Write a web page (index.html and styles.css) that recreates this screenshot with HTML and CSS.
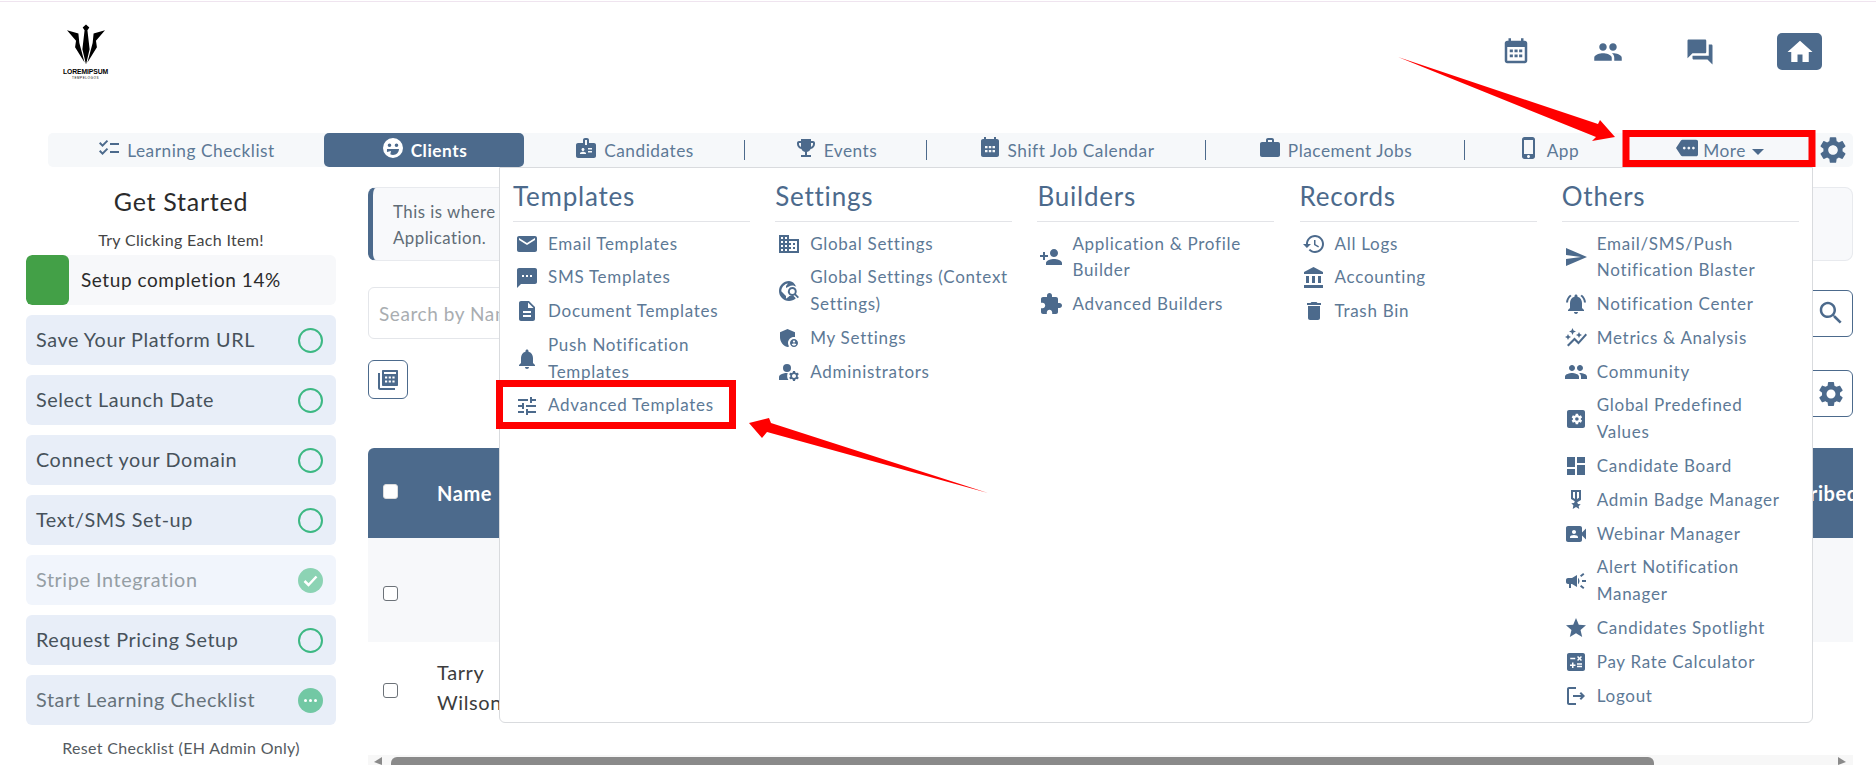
FILE: index.html
```html
<!DOCTYPE html>
<html lang="en">
<head>
<meta charset="utf-8">
<title>Clients</title>
<link rel="stylesheet" href="styles.css">
</head>
<body>
<svg class="sprite" xmlns="http://www.w3.org/2000/svg">
<symbol id="i-cal" viewBox="0 0 24 24"><path d="M19 3h-1V1h-2v2H8V1H6v2H5c-1.1 0-2 .9-2 2v14c0 1.1.9 2 2 2h14c1.1 0 2-.9 2-2V5c0-1.1-.9-2-2-2zm0 16H5V8h14v11zM7 10h2.5v2.2H7zm3.8 0h2.5v2.2h-2.5zm3.700 0H17v2.2h-2.500zM7 14h2.500v2.200H7zm3.800 0h2.500v2.200h-2.500zm3.700 0H17v2.200h-2.500z"/></symbol>
<symbol id="i-calfill" viewBox="0 0 24 24"><path fill-rule="evenodd" d="M19 3h-1V1h-2v2H8V1H6v2H5c-1.100 0-2 .9-2 2v14c0 1.100.9 2 2 2h14c1.100 0 2-.9 2-2V5c0-1.100-.9-2-2-2zM7 10h2.500v2.200H7zm3.800 0h2.500v2.200h-2.500zm3.700 0H17v2.200h-2.500zM7 14h2.500v2.200H7zm3.800 0h2.500v2.200h-2.500zm3.700 0H17v2.200h-2.500z"/></symbol>
<symbol id="i-people" viewBox="0 0 24 24"><path d="M16 11c1.660 0 2.990-1.340 2.990-3S17.660 5 16 5c-1.660 0-3 1.340-3 3s1.340 3 3 3zm-8 0c1.660 0 2.990-1.340 2.990-3S9.660 5 8 5C6.340 5 5 6.340 5 8s1.340 3 3 3zm0 2c-2.330 0-7 1.170-7 3.500V19h14v-2.500c0-2.330-4.670-3.500-7-3.500zm8 0c-.29 0-.62.02-.97.05 1.160.84 1.970 1.970 1.970 3.450V19h6v-2.500c0-2.330-4.670-3.500-7-3.500z"/></symbol>
<symbol id="i-forum" viewBox="0 0 24 24"><path d="M21 6h-2v9H6v2c0 .55.45 1 1 1h11l4 4V7c0-.55-.45-1-1-1zm-4 6V3c0-.55-.45-1-1-1H3c-.55 0-1 .45-1 1v14l4-4h10c.55 0 1-.45 1-1z"/></symbol>
<symbol id="i-home" viewBox="0 0 24 24"><path d="M10 20v-6h4v6h5v-8h3L12 3 2 12h3v8z"/></symbol>
<symbol id="i-gear" viewBox="0 0 24 24"><path d="M19.140 12.940c.04-.3.06-.61.06-.94 0-.32-.02-.64-.07-.94l2.030-1.580c.18-.14.23-.41.12-.61l-1.920-3.320c-.12-.22-.37-.29-.59-.22l-2.390.96c-.5-.38-1.030-.7-1.620-.94l-.36-2.540c-.04-.24-.24-.41-.48-.41h-3.840c-.24 0-.43.17-.47.41l-.36 2.540c-.59.24-1.130.57-1.620.94l-2.390-.96c-.22-.08-.47 0-.59.22L2.740 8.870c-.12.21-.08.47.12.61l2.030 1.580c-.05.3-.09.63-.09.94s.02.64.07.94l-2.030 1.580c-.18.14-.23.41-.12.61l1.920 3.320c.12.22.37.29.59.22l2.390-.96c.5.38 1.030.7 1.620.94l.36 2.540c.05.24.24.41.48.41h3.840c.24 0 .44-.17.47-.41l.36-2.540c.59-.24 1.130-.56 1.620-.94l2.390.96c.22.08.47 0 .59-.22l1.920-3.320c.12-.22.07-.47-.12-.61l-2.010-1.580zM12 15.600c-1.980 0-3.600-1.620-3.600-3.600s1.620-3.600 3.600-3.600 3.600 1.620 3.600 3.600-1.620 3.600-3.600 3.600z"/></symbol>
<symbol id="i-search" viewBox="0 0 24 24"><path d="M15.500 14h-.79l-.28-.27C15.410 12.590 16 11.110 16 9.500 16 5.910 13.090 3 9.500 3S3 5.910 3 9.500 5.910 16 9.500 16c1.610 0 3.090-.59 4.230-1.570l.27.28v.79l5 4.990L20.490 19l-4.990-5zm-6 0C7.010 14 5 11.990 5 9.500S7.010 5 9.500 5 14 7.010 14 9.500 11.990 14 9.500 14z"/></symbol>
<symbol id="i-mail" viewBox="0 0 24 24"><path d="M20 4H4c-1.100 0-1.990.9-1.990 2L2 18c0 1.100.9 2 2 2h16c1.100 0 2-.9 2-2V6c0-1.100-.9-2-2-2zm0 4l-8 5-8-5V6l8 5 8-5v2z"/></symbol>
<symbol id="i-sms" viewBox="0 0 24 24"><path d="M20 2H4c-1.100 0-1.990.9-1.990 2L2 22l4-4h14c1.100 0 2-.9 2-2V4c0-1.100-.9-2-2-2zM9 11H7V9h2v2zm4 0h-2V9h2v2zm4 0h-2V9h2v2z"/></symbol>
<symbol id="i-doc" viewBox="0 0 24 24"><path d="M14 2H6c-1.100 0-1.990.9-1.990 2L4 20c0 1.100.89 2 1.990 2H18c1.100 0 2-.9 2-2V8l-6-6zm2 16H8v-2h8v2zm0-4H8v-2h8v2zm-3-5V3.500L18.500 9H13z"/></symbol>
<symbol id="i-bell" viewBox="0 0 24 24"><path d="M12 22c1.100 0 2-.9 2-2h-4c0 1.100.89 2 2 2zm6-6v-5c0-3.070-1.640-5.640-4.500-6.320V4c0-.83-.67-1.500-1.500-1.500s-1.500.67-1.500 1.500v.68C7.630 5.360 6 7.920 6 11v5l-2 2v1h16v-1l-2-2z"/></symbol>
<symbol id="i-tune" viewBox="0 0 24 24"><path d="M3 17v2h6v-2H3zM3 5v2h10V5H3zm10 16v-2h8v-2h-8v-2h-2v6h2zM7 9v2H3v2h4v2h2V9H7zm14 4v-2H11v2h10zm-6-4h2V7h4V5h-4V3h-2v6z"/></symbol>
<symbol id="i-domain" viewBox="0 0 24 24"><path d="M12 7V3H2v18h20V7H12zM6 19H4v-2h2v2zm0-4H4v-2h2v2zm0-4H4V9h2v2zm0-4H4V5h2v2zm4 12H8v-2h2v2zm0-4H8v-2h2v2zm0-4H8V9h2v2zm0-4H8V5h2v2zm10 12h-8v-2h2v-2h-2v-2h2v-2h-2V9h8v10zm-2-8h-2v2h2v-2zm0 4h-2v2h2v-2z"/></symbol>
<symbol id="i-explore" viewBox="0 0 24 24"><path d="M12 2C6.500 2 2 6.500 2 12s4.500 10 10 10c2.600 0 5-1 6.800-2.700l-3-3c-1 .6-2.200.9-3.500.7-1.100 1.300-2.300 2.200-3.300 2.500V17L6.500 14.500 4.300 12.300c0-4 3-7.300 6.700-7.800L9 7v2l3-1.500c1-.6 2.100-1 3.300-1 1.500 0 2.900.5 4 1.500C17.800 4.200 15 2 12 2z"/><path d="M15.300 8a4.500 4.500 0 0 0-3.700 7c.8 1.200 2.200 2 3.700 2 .9 0 1.700-.3 2.400-.7l3 3 1.300-1.300-3-3c.4-.7.700-1.500.700-2.400a4.400 4.400 0 0 0-4.400-4.600zm0 2a2.500 2.500 0 1 1 0 5 2.500 2.500 0 0 1 0-5z"/></symbol>
<symbol id="i-shield" viewBox="0 0 24 24"><path d="M17 11c.34 0 .67.04 1 .09V6.270L10.500 3 3 6.270v4.910c0 4.540 3.200 8.790 7.500 9.820.55-.13 1.080-.32 1.600-.55A5.970 5.970 0 0 1 11 17c0-3.310 2.690-6 6-6z"/><path d="M17 13c-2.210 0-4 1.790-4 4s1.790 4 4 4 4-1.790 4-4-1.790-4-4-4zm0 1.380c.62 0 1.120.51 1.120 1.120s-.51 1.120-1.120 1.120-1.120-.51-1.120-1.120.5-1.120 1.120-1.120zm0 5.370c-.93 0-1.740-.46-2.240-1.170.05-.72 1.510-1.080 2.240-1.080s2.190.36 2.240 1.080c-.5.710-1.310 1.170-2.240 1.170z"/></symbol>
<symbol id="i-manage" viewBox="0 0 24 24"><circle cx="10" cy="8" r="4"/><path d="M10.670 13.020C10.450 13.010 10.230 13 10 13c-2.420 0-4.680.67-6.610 1.820-.88.52-1.390 1.500-1.390 2.530V20h9.430c-.79-1.130-1.260-2.510-1.260-4 0-1.070.25-2.060.5-2.980zM20.750 16c0-.22-.03-.42-.06-.63l1.140-1.010-1-1.730-1.450.49c-.32-.27-.68-.48-1.080-.63L18 11h-2l-.3 1.490c-.4.15-.76.36-1.080.63l-1.450-.49-1 1.730 1.140 1.010c-.03.21-.06.41-.06.63s.03.42.06.63l-1.140 1.010 1 1.730 1.450-.49c.32.27.68.48 1.080.63L16 21h2l.3-1.490c.4-.15.76-.36 1.080-.63l1.450.49 1-1.730-1.140-1.010c.03-.21.06-.41.06-.63zM17 18c-1.100 0-2-.9-2-2s.9-2 2-2 2 .9 2 2-.9 2-2 2z"/></symbol>
<symbol id="i-padd" viewBox="0 0 24 24"><path d="M15 12c2.210 0 4-1.790 4-4s-1.790-4-4-4-4 1.790-4 4 1.790 4 4 4zm-9-2V7H4v3H1v2h3v3h2v-3h3v-2H6zm9 4c-2.670 0-8 1.340-8 4v2h16v-2c0-2.660-5.330-4-8-4z"/></symbol>
<symbol id="i-ext" viewBox="0 0 24 24"><path d="M20.500 11H19V7c0-1.100-.9-2-2-2h-4V3.500C13 2.120 11.880 1 10.500 1S8 2.120 8 3.500V5H4c-1.100 0-1.990.9-1.990 2v3.800H3.500c1.490 0 2.700 1.210 2.700 2.700s-1.210 2.700-2.700 2.700H2V20c0 1.100.9 2 2 2h3.800v-1.500c0-1.490 1.210-2.700 2.700-2.700 1.490 0 2.700 1.210 2.700 2.700V22H17c1.100 0 2-.9 2-2v-4h1.500c1.380 0 2.500-1.120 2.500-2.500S21.880 11 20.500 11z"/></symbol>
<symbol id="i-history" viewBox="0 0 24 24"><path d="M13 3c-4.970 0-9 4.030-9 9H1l3.890 3.890.07.14L9 12H6c0-3.870 3.130-7 7-7s7 3.130 7 7-3.130 7-7 7c-1.930 0-3.680-.79-4.940-2.060l-1.420 1.420C8.270 19.990 10.510 21 13 21c4.970 0 9-4.030 9-9s-4.030-9-9-9zm-1 5v5l4.280 2.540.72-1.210-3.500-2.080V8H12z"/></symbol>
<symbol id="i-bank" viewBox="0 0 24 24"><path d="M4 10v7h3v-7H4zm6 0v7h3v-7h-3zM2 22h19v-3H2v3zm14-12v7h3v-7h-3zm-4.500-9L2 6v2h19V6l-9.500-5z"/></symbol>
<symbol id="i-trash" viewBox="0 0 24 24"><path d="M6 19c0 1.100.9 2 2 2h8c1.100 0 2-.9 2-2V7H6v12zM19 4h-3.500l-1-1h-5l-1 1H5v2h14V4z"/></symbol>
<symbol id="i-send" viewBox="0 0 24 24"><path d="M2.010 21L23 12 2.010 3 2 10l15 2-15 2z"/></symbol>
<symbol id="i-bella" viewBox="0 0 24 24"><path d="M7.580 4.080L6.150 2.650C3.750 4.480 2.170 7.300 2.030 10.500h2c.15-2.650 1.510-4.970 3.550-6.420zm12.390 6.420h2c-.15-3.200-1.730-6.020-4.120-7.850l-1.420 1.430c2.020 1.450 3.390 3.770 3.540 6.420zM18 11c0-3.070-1.640-5.640-4.500-6.320V4c0-.83-.67-1.500-1.500-1.500s-1.500.67-1.500 1.500v.68C7.630 5.360 6 7.920 6 11v5l-2 2v1h16v-1l-2-2v-5zm-6 11c.14 0 .27-.01.4-.04.65-.14 1.180-.58 1.440-1.180.1-.24.15-.5.15-.78h-4c.01 1.100.9 2 2.010 2z"/></symbol>
<symbol id="i-graph" viewBox="0 0 24 24"><path d="M14.060 9.940L12 9l2.060-.94L15 6l.94 2.060L18 9l-2.060.94L15 12zM4 14l.94-2.060L7 11l-2.060-.94L4 8l-.94 2.060L1 11l2.060.94zm4.500-5l1.090-2.410L12 5.500 9.590 4.410 8.500 2 7.410 4.410 5 5.500l2.410 1.090zm-4 11.500l6-6.010 4 4L23 8.930l-1.410-1.410-7.090 7.970-4-4L3 19z"/></symbol>
<symbol id="i-gbox" viewBox="0 0 24 24"><path fill-rule="evenodd" d="M5 3h14c1.100 0 2 .9 2 2v14c0 1.100-.9 2-2 2H5c-1.100 0-2-.9-2-2V5c0-1.100.9-2 2-2zm11.800 9.600c.03-.2.05-.4.05-.6s-.02-.4-.05-.6l1.300-1-1.200-2.100-1.550.62c-.3-.24-.65-.44-1.020-.6L14.100 6.700h-2.400l-.23 1.620c-.37.16-.72.36-1.020.6L8.900 8.300 7.700 10.400l1.300 1c-.03.2-.05.4-.05.6s.02.4.05.6l-1.300 1 1.200 2.100 1.550-.62c.3.24.65.44 1.020.6l.23 1.620h2.400l.23-1.620c.37-.16.72-.36 1.020-.6l1.550.62 1.200-2.100zM12.900 13.800a1.800 1.800 0 1 1 0-3.600 1.800 1.800 0 0 1 0 3.600z"/></symbol>
<symbol id="i-dash" viewBox="0 0 24 24"><path d="M3 13h8V3H3v10zm0 8h8v-6H3v6zm10 0h8V11h-8v10zm0-18v6h8V3h-8z"/></symbol>
<symbol id="i-medal" viewBox="0 0 24 24"><path d="M17 10.430V2H7v8.430c0 .35.18.68.49.86l3.300 1.980-.78 1.850-2.730.24 2.070 1.790L8.730 21 12 19.070 15.270 21l-.62-2.850 2.070-1.790-2.730-.24-.78-1.850 3.300-1.980c.31-.18.49-.51.49-.86zM11 11.070l-2-1.200V4h2v7.070zm4-1.200l-2 1.200V4h2v5.870z"/></symbol>
<symbol id="i-video" viewBox="0 0 24 24"><path d="M18 10.480V6c0-1.100-.9-2-2-2H4c-1.100 0-2 .9-2 2v12c0 1.100.9 2 2 2h12c1.100 0 2-.9 2-2v-4.480l4 3.980v-11l-4 3.980zM10 8c1.100 0 2 .9 2 2s-.9 2-2 2-2-.9-2-2 .9-2 2-2zm4 8H6v-.57c0-.81.48-1.530 1.220-1.850.85-.37 1.790-.58 2.780-.58.99 0 1.930.21 2.780.58.74.32 1.220 1.040 1.220 1.850V16z"/></symbol>
<symbol id="i-camp" viewBox="0 0 24 24"><path d="M18 11v2h4v-2h-4zm-2 6.610c.96.71 2.210 1.650 3.200 2.390.4-.53.8-1.070 1.200-1.600-.99-.74-2.240-1.680-3.200-2.400-.4.54-.8 1.080-1.200 1.610zM20.400 5.600c-.4-.53-.8-1.070-1.200-1.600-.99.74-2.240 1.680-3.200 2.400.4.53.8 1.070 1.200 1.600.96-.72 2.210-1.650 3.200-2.400zM4 9c-1.100 0-2 .9-2 2v2c0 1.100.9 2 2 2h1v4h2v-4h1l5 3V6L8 9H4zm11.500 3c0-1.330-.58-2.530-1.500-3.350v6.690c.92-.81 1.500-2.010 1.500-3.340z"/></symbol>
<symbol id="i-star" viewBox="0 0 24 24"><path d="M12 17.270L18.180 21l-1.640-7.030L22 9.240l-7.190-.61L12 2 9.190 8.630 2 9.240l5.460 4.730L5.820 21z"/></symbol>
<symbol id="i-calc" viewBox="0 0 24 24"><path d="M19 3H5c-1.100 0-2 .9-2 2v14c0 1.100.9 2 2 2h14c1.100 0 2-.9 2-2V5c0-1.100-.9-2-2-2zm-5.970 4.060L14.090 6l1.410 1.410L16.910 6l1.060 1.060-1.410 1.410 1.410 1.410-1.060 1.060-1.410-1.400-1.410 1.410-1.060-1.060 1.410-1.410-1.410-1.420zM6.250 7.720h5v1.500h-5v-1.500zM11.500 16h-2v2H8v-2H6v-1.500h2v-2h1.500v2h2V16zm6.500 1.250h-5v-1.500h5v1.500zm0-2.500h-5v-1.500h5v1.500z"/></symbol>
<symbol id="i-logout" viewBox="0 0 24 24"><path d="M17 8l-1.410 1.410L17.170 11H9v2h8.170l-1.580 1.580L17 16l4-4-4-4zM5 5h7V3H5c-1.100 0-2 .9-2 2v14c0 1.100.9 2 2 2h7v-2H5V5z"/></symbol>
<symbol id="i-check" viewBox="0 0 24 24"><path d="M22 7h-9v2h9V7zm0 8h-9v2h9v-2zM5.540 11L2 7.460l1.410-1.410 2.120 2.120 4.240-4.240 1.410 1.410L5.540 11zm0 8L2 15.460l1.410-1.410 2.120 2.120 4.240-4.240 1.410 1.410L5.540 19z"/></symbol>
<symbol id="i-face" viewBox="0 0 24 24"><path fill-rule="evenodd" d="M12 2a10 10 0 1 0 0 20 10 10 0 0 0 0-20zM8.500 7.500a1.800 1.800 0 1 1 0 3.600 1.800 1.800 0 0 1 0-3.600zm7 0a1.800 1.800 0 1 1 0 3.600 1.800 1.800 0 0 1 0-3.600zM6 13h12c0 3-2.500 6-6 6-1 0-2-.3-2.700-.7l.7-3.300-4 .9c-.1-.7 0-2.900 0-2.900z"/></symbol>
<symbol id="i-badge" viewBox="0 0 24 24"><path d="M20 7h-5V4c0-1.100-.9-2-2-2h-2c-1.100 0-2 .9-2 2v3H4c-1.100 0-2 .9-2 2v11c0 1.100.9 2 2 2h16c1.100 0 2-.9 2-2V9c0-1.100-.9-2-2-2zM9 12c.83 0 1.500.67 1.500 1.500S9.830 15 9 15s-1.500-.67-1.500-1.500S8.170 12 9 12zm3 6H6v-.75c0-1 2-1.500 3-1.500s3 .5 3 1.500V18zm1-9h-2V4h2v5zm5 7.500h-4V15h4v1.500zm0-3h-4V12h4v1.500z"/></symbol>
<symbol id="i-trophy" viewBox="0 0 24 24"><path d="M19 5h-2V3H7v2H5c-1.100 0-2 .9-2 2v1c0 2.550 1.920 4.630 4.390 4.940.63 1.500 1.980 2.630 3.610 2.960V19H7v2h10v-2h-4v-3.100c1.630-.33 2.980-1.460 3.610-2.960C19.080 12.630 21 10.550 21 8V7c0-1.100-.9-2-2-2zM5 8V7h2v3.820C5.840 10.400 5 9.300 5 8zm14 0c0 1.300-.84 2.400-2 2.820V7h2v1z"/></symbol>
<symbol id="i-work" viewBox="0 0 24 24"><path d="M20 6h-4V4c0-1.110-.89-2-2-2h-4c-1.110 0-2 .89-2 2v2H4c-1.110 0-1.990.89-1.990 2L2 19c0 1.110.89 2 2 2h16c1.110 0 2-.89 2-2V8c0-1.110-.89-2-2-2zm-6 0h-4V4h4v2z"/></symbol>
<symbol id="i-phone" viewBox="0 0 24 24"><path d="M15.500 1h-8C6.120 1 5 2.120 5 3.500v17C5 21.880 6.120 23 7.500 23h8c1.380 0 2.500-1.120 2.500-2.500v-17C18 2.120 16.880 1 15.500 1zm-4 21c-.83 0-1.500-.67-1.500-1.500s.67-1.500 1.500-1.500 1.500.67 1.500 1.500-.67 1.500-1.500 1.500zm4.500-4H7V4h9v14z"/></symbol>
<symbol id="i-more" viewBox="0 0 24 24"><path d="M22 3H7c-.69 0-1.230.35-1.590.88L0 12l5.410 8.110c.36.53.9.89 1.590.89h15c1.100 0 2-.9 2-2V5c0-1.100-.9-2-2-2zM9 13.500c-.83 0-1.500-.67-1.500-1.500s.67-1.500 1.500-1.500 1.500.67 1.500 1.500-.67 1.500-1.500 1.500zm5 0c-.83 0-1.500-.67-1.500-1.500s.67-1.500 1.500-1.500 1.500.67 1.500 1.500-.67 1.500-1.500 1.500zm5 0c-.83 0-1.500-.67-1.500-1.500s.67-1.500 1.500-1.500 1.500.67 1.500 1.500-.67 1.500-1.500 1.500z"/></symbol>
<symbol id="i-copycalc" viewBox="0 0 24 24"><path d="M2 5v15c0 1.100.9 2 2 2h15v-2H4V5H2z"/><path d="M6 3v14c0 .55.45 1 1 1h14c.55 0 1-.45 1-1V3c0-.55-.45-1-1-1H7c-.55 0-1 .45-1 1z"/><path fill="#fff" d="M8 4h12v2H8zM9 8.500h2.200v2H9zm3.700 0h2.200v2h-2.200zm3.700 0h2.200v2h-2.200zM9 12.500h2.200v2H9zm3.700 0h2.200v2h-2.200zm3.700 0h2.200v2h-2.200z"/></symbol>
</svg>

<div class="topline"></div>

<header class="header">
  <div class="logo">
    <svg class="logo-mark" viewBox="0 0 40 42"><path d="M0 6l12 3.500 1 10 5.500 20.500-10-16 1-7zM40 6l-12 3.500-1 10-5.500 20.500 10-16-1-7zM20 0l3.500 3-2 3 2.300 20-3.800 16-3.800-16 2.300-20-2-3z"/></svg>
    <span class="logo-name">LOREMIPSUM</span>
    <span class="logo-sub">TEMPELOGOS</span>
  </div>
  <div class="header-icons">
    <svg class="hicon"><use href="#i-cal"/></svg>
    <svg class="hicon"><use href="#i-people"/></svg>
    <svg class="hicon"><use href="#i-forum"/></svg>
    <span class="home-btn"><svg class="home-icon"><use href="#i-home"/></svg></span>
  </div>
</header>

<nav class="nav">
  <a class="tab w-learn"><svg class="nicon"><use href="#i-check"/></svg>Learning Checklist</a>
  <a class="tab tab-active w-clients"><svg class="nicon"><use href="#i-face"/></svg>Clients</a>
  <a class="tab w-cand tab-sep"><svg class="nicon"><use href="#i-badge"/></svg>Candidates</a>
  <a class="tab w-events tab-sep"><svg class="nicon"><use href="#i-trophy"/></svg>Events</a>
  <a class="tab w-shift tab-sep"><svg class="nicon"><use href="#i-calfill"/></svg>Shift Job Calendar</a>
  <a class="tab w-place tab-sep"><svg class="nicon"><use href="#i-work"/></svg>Placement Jobs</a>
  <a class="tab w-app"><svg class="nicon"><use href="#i-phone"/></svg>App</a>
  <a class="tab w-more"><svg class="nicon nicon-more"><use href="#i-more"/></svg>More<span class="caret"></span></a>
  <svg class="nav-gear"><use href="#i-gear"/></svg>
</nav>

<main class="main">
  <aside class="sidebar">
    <h2 class="side-title">Get Started</h2>
    <p class="side-sub">Try Clicking Each Item!</p>
    <div class="progress"><span class="progress-fill"></span><span class="progress-label">Setup completion 14%</span></div>
    <div class="step"><span>Save Your Platform URL</span><i class="ring"></i></div>
    <div class="step"><span>Select Launch Date</span><i class="ring"></i></div>
    <div class="step"><span>Connect your Domain</span><i class="ring"></i></div>
    <div class="step"><span>Text/SMS Set-up</span><i class="ring"></i></div>
    <div class="step step-done"><span>Stripe Integration</span>
      <svg class="state" viewBox="0 0 25 25"><circle cx="12.500" cy="12.500" r="12.500" fill="#8cd3b4"/><path d="M6.500 13l4 4 8-8.500" fill="none" stroke="#fff" stroke-width="2.500"/></svg></div>
    <div class="step"><span>Request Pricing Setup</span><i class="ring"></i></div>
    <div class="step step-cur"><span>Start Learning Checklist</span>
      <svg class="state" viewBox="0 0 25 25"><circle cx="12.500" cy="12.500" r="12.500" fill="#72c8a4"/><circle cx="7.500" cy="12.500" r="1.500" fill="#fff"/><circle cx="12.500" cy="12.500" r="1.500" fill="#fff"/><circle cx="17.500" cy="12.500" r="1.500" fill="#fff"/></svg></div>
    <p class="side-reset">Reset Checklist (EH Admin Only)</p>
  </aside>

  <section class="content">
    <div class="alert">This is where<br>Application.</div>
    <div class="search-row">
      <div class="search-input">Search by Name</div>
      <span class="icon-btn search-btn"><svg class="btn-icon"><use href="#i-search"/></svg></span>
    </div>
    <div class="tools-row">
      <span class="icon-btn copy-btn"><svg class="copy-icon"><use href="#i-copycalc"/></svg></span>
      <span class="icon-btn gear-btn"><svg class="btn-icon"><use href="#i-gear"/></svg></span>
    </div>
    <div class="table">
      <div class="thead">
        <span class="cb cb-head"></span>
        <span class="th-name">Name</span>
        <span class="th-last"><span>Subscribed</span></span>
      </div>
      <div class="trow trow-alt"><span class="cb"></span></div>
      <div class="trow trow-plain"><span class="cb"></span><span class="td-name">Tarry<br>Wilson</span></div>
    </div>
    <div class="hscroll"><span class="arrow-l"></span><span class="thumb"></span><span class="arrow-r"></span></div>
  </section>
</main>

<div class="menu">
  <div class="menu-col">
    <h3 class="menu-head">Templates</h3>
    <a class="mi"><svg class="micon"><use href="#i-mail"/></svg><span>Email Templates</span></a>
    <a class="mi"><svg class="micon"><use href="#i-sms"/></svg><span>SMS Templates</span></a>
    <a class="mi"><svg class="micon"><use href="#i-doc"/></svg><span>Document Templates</span></a>
    <a class="mi"><svg class="micon"><use href="#i-bell"/></svg><span>Push Notification<br>Templates</span></a>
    <a class="mi"><svg class="micon"><use href="#i-tune"/></svg><span>Advanced Templates</span></a>
  </div>
  <div class="menu-col">
    <h3 class="menu-head">Settings</h3>
    <a class="mi"><svg class="micon"><use href="#i-domain"/></svg><span>Global Settings</span></a>
    <a class="mi"><svg class="micon"><use href="#i-explore"/></svg><span>Global Settings (Context<br>Settings)</span></a>
    <a class="mi"><svg class="micon"><use href="#i-shield"/></svg><span>My Settings</span></a>
    <a class="mi"><svg class="micon"><use href="#i-manage"/></svg><span>Administrators</span></a>
  </div>
  <div class="menu-col">
    <h3 class="menu-head">Builders</h3>
    <a class="mi"><svg class="micon"><use href="#i-padd"/></svg><span>Application &amp; Profile<br>Builder</span></a>
    <a class="mi"><svg class="micon"><use href="#i-ext"/></svg><span>Advanced Builders</span></a>
  </div>
  <div class="menu-col">
    <h3 class="menu-head">Records</h3>
    <a class="mi"><svg class="micon"><use href="#i-history"/></svg><span>All Logs</span></a>
    <a class="mi"><svg class="micon"><use href="#i-bank"/></svg><span>Accounting</span></a>
    <a class="mi"><svg class="micon"><use href="#i-trash"/></svg><span>Trash Bin</span></a>
  </div>
  <div class="menu-col">
    <h3 class="menu-head">Others</h3>
    <a class="mi"><svg class="micon"><use href="#i-send"/></svg><span>Email/SMS/Push<br>Notification Blaster</span></a>
    <a class="mi"><svg class="micon"><use href="#i-bella"/></svg><span>Notification Center</span></a>
    <a class="mi"><svg class="micon"><use href="#i-graph"/></svg><span>Metrics &amp; Analysis</span></a>
    <a class="mi"><svg class="micon"><use href="#i-people"/></svg><span>Community</span></a>
    <a class="mi"><svg class="micon"><use href="#i-gbox"/></svg><span>Global Predefined<br>Values</span></a>
    <a class="mi"><svg class="micon"><use href="#i-dash"/></svg><span>Candidate Board</span></a>
    <a class="mi"><svg class="micon"><use href="#i-medal"/></svg><span>Admin Badge Manager</span></a>
    <a class="mi"><svg class="micon"><use href="#i-video"/></svg><span>Webinar Manager</span></a>
    <a class="mi"><svg class="micon"><use href="#i-camp"/></svg><span>Alert Notification<br>Manager</span></a>
    <a class="mi"><svg class="micon"><use href="#i-star"/></svg><span>Candidates Spotlight</span></a>
    <a class="mi"><svg class="micon"><use href="#i-calc"/></svg><span>Pay Rate Calculator</span></a>
    <a class="mi"><svg class="micon"><use href="#i-logout"/></svg><span>Logout</span></a>
  </div>
</div>

<svg class="annotations" viewBox="0 0 1876 765">
  <rect class="red-box" x="1626" y="133.500" width="186" height="30"/>
  <rect class="red-box" x="499.500" y="383.500" width="233" height="42"/>
  <polygon class="red-fill" points="1398,57 1598,124 1600,120 1615,137 1592,141 1596,137"/>
  <polygon class="red-fill" points="988,493 771,423 769,418 749,423 762,438 767,432"/>
</svg>
</body>
</html>
```
FILE: styles.css
```css
* { box-sizing: border-box; }
html, body { margin: 0; padding: 0; }
body {
  width: 1876px;
  height: 765px;
  overflow: hidden;
  position: relative;
  background: #fff;
  font-family: "Lato", "Noto Sans", sans-serif;
  color: #2f3a44;
}
.sprite { display: none; }
.topline { height: 1px; margin-top: 1px; background: #efe4ef; }

/* header */
.header {
  height: 131px;
  display: flex;
  justify-content: space-between;
  align-items: flex-start;
  padding: 31px 54px 0 64px;
}
.logo { display: flex; flex-direction: column; align-items: center; width: 43px; margin-top: -9px; color: #000; }
.logo-mark { width: 38px; height: 41px; fill: #000; }
.logo-name { font: 700 6.800px/8px "Liberation Sans", sans-serif; margin-top: 3px; letter-spacing: -.1px; white-space: nowrap; }
.logo-sub { font: 400 3px/4px "Liberation Sans", sans-serif; letter-spacing: .6px; white-space: nowrap; }
.header-icons { display: flex; align-items: center; gap: 62px; fill: #4c6a8c; }
.hicon { width: 30px; height: 30px; fill: #4c6a8c; }
.home-btn { width: 45px; height: 37px; border-radius: 5px; background: #4c6a8c; display: flex; align-items: center; justify-content: center; }
.home-icon { width: 30px; height: 30px; fill: #fff; }

/* nav */
.nav {
  margin-left: 48px;
  width: 1805px;
  height: 34px;
  background: #f6f8fa;
  border-radius: 5px;
  display: flex;
  align-items: center;
  font-size: 17.300px;
  letter-spacing: .03em;
  color: #5d7996;
}
.tab { height: 20px; display: flex; align-items: center; justify-content: center; gap: 6px; white-space: nowrap; }
.tab-sep { border-right: 1px solid #4c6a8c; }
.w-learn { width: 276px; }
.w-clients { width: 200px; }
.w-cand { width: 221px; }
.w-events { width: 182px; }
.w-shift { width: 279px; }
.w-place { width: 259px; }
.w-app { width: 166px; }
.w-more { width: 178px; gap: 5px; }
.tab-active { height: 34px; background: #4c6a8c; color: #fff; font-weight: 700; border-radius: 5px; }
.nicon { width: 24px; height: 24px; fill: #4c6a8c; margin-bottom: 5px; flex: none; }
.tab-active .nicon { fill: #fff; }
.nicon-more { width: 22px; }
.caret { width: 0; height: 0; margin-left: 1px; margin-top: 3px; border-left: 6px solid transparent; border-right: 6px solid transparent; border-top: 6px solid #4c6a8c; }
.nav-gear { width: 32px; height: 32px; fill: #4c6a8c; margin-left: 8px; }

/* main */
.main { height: 598px; display: flex; gap: 32px; padding-left: 26px; }
.sidebar { width: 310px; flex: none; display: flex; flex-direction: column; }
.side-title { margin: 18px 0 0; font-size: 25px; line-height: 32px; font-weight: 400; letter-spacing: .03em; text-align: center; color: #2b2b2b; }
.side-sub { margin: 13px 0 5px; font-size: 16px; line-height: 20px; letter-spacing: .02em; text-align: center; color: #444; }
.progress { height: 50px; border-radius: 6px; background: #f7f8fa; display: flex; align-items: center; margin-bottom: 10px; overflow: hidden; }
.progress-fill { width: 43px; height: 50px; background: #43a047; border-radius: 6px; }
.progress-label { margin-left: 12px; font-size: 19px; line-height: 48px; height: 48px; letter-spacing: .03em; color: #2b2b2b; white-space: nowrap; }
.step {
  height: 50px;
  margin-bottom: 10px;
  flex: none;
  padding: 0 13px 0 10px;
  border-radius: 6px;
  background: #e8eef8;
  display: flex;
  align-items: center;
  justify-content: space-between;
  font-size: 19.800px;
  letter-spacing: .03em;
  color: #47525b;
  white-space: nowrap;
}
.step > span { line-height: 48px; height: 50px; }
.step-done { background: #f1f5fc; color: #959ea4; }
.step-cur { color: #66727a; }
.ring { width: 25px; height: 25px; border-radius: 50%; border: 2.500px solid #3cb883; flex: none; }
.state { width: 25px; height: 25px; flex: none; }
.side-reset { margin: 3px 0 0; font-size: 16px; line-height: 20px; letter-spacing: .02em; text-align: center; color: #555b61; white-space: nowrap; }

/* content */
.content { width: 1485px; flex: none; display: flex; flex-direction: column; padding-top: 20px; min-height: 0; }
.alert {
  height: 74px;
  flex: none;
  padding: 11px 20px;
  background: #f8f9fb;
  border: 1px solid #e8eaee;
  border-left: 5px solid #4c6a8c;
  border-radius: 8px;
  font-size: 16.800px;
  line-height: 26px;
  letter-spacing: .03em;
  color: #606c76;
}
.search-row { display: flex; align-items: center; justify-content: space-between; margin-top: 26px; height: 52px; flex: none; }
.search-input { width: 1400px; height: 52px; padding: 0 10px; border: 1px solid #e4e6ea; border-radius: 6px; display: flex; align-items: center; font-size: 19px; letter-spacing: .03em; color: #a9adb1; }
.icon-btn { border: 1px solid #4c6a8c; border-radius: 6px; background: #fff; display: flex; align-items: center; justify-content: center; flex: none; }
.search-btn { width: 60px; height: 47px; padding-left: 16px; }
.btn-icon { width: 30px; height: 30px; fill: #4c6a8c; }
.tools-row { display: flex; align-items: flex-end; justify-content: space-between; margin-top: 21px; height: 57px; flex: none; }
.copy-btn { width: 40px; height: 39px; margin-bottom: 18px; }
.copy-icon { width: 24px; height: 24px; fill: #4c6a8c; }
.gear-btn { width: 60px; height: 47px; padding-left: 16px; }

/* table */
.table { margin-top: 31px; flex: 1; min-height: 0; overflow: hidden; }
.thead { height: 90px; background: #4c6a8c; border-radius: 6px 0 0 0; display: flex; align-items: center; color: #fff; font-size: 20px; font-weight: 700; letter-spacing: .03em; }
.cb { width: 15px; height: 15px; margin-left: 15px; border: 1px solid #6c7278; border-radius: 3px; background: #fff; flex: none; }
.cb-head { border-color: #ddd; margin-bottom: 4px; }
.th-name { margin-left: 39px; }
.th-last { margin-left: auto; width: 98px; overflow: hidden; white-space: nowrap; }
.trow { display: flex; align-items: center; }
.trow .cb { margin-top: 7px; }
.trow-alt { height: 104px; background: #f7f8fa; }
.trow-plain { height: 90px; }
.td-name { margin-left: 39px; font-size: 20px; line-height: 30px; letter-spacing: .03em; color: #3c3c3c; }
.hscroll { height: 10px; flex: none; background: #f7f7f7; display: flex; align-items: flex-end; position: relative; }
.thumb { width: 1263px; height: 8px; background: #8a8a8a; border-radius: 6px 6px 0 0; margin-left: 9px; }
.arrow-l { width: 0; height: 0; margin-left: 6px; margin-bottom: 0; border-top: 5px solid transparent; border-bottom: 3px solid transparent; border-right: 8px solid #8a8a8a; }
.arrow-r { width: 0; height: 0; margin-left: auto; margin-right: 7px; border-top: 5px solid transparent; border-bottom: 3px solid transparent; border-left: 8px solid #8a8a8a; }

/* dropdown */
.menu {
  position: absolute;
  left: 499px;
  top: 167px;
  width: 1314px;
  height: 556px;
  padding: 12px 13px 0;
  background: #fff;
  border: 1px solid #d9dbde;
  border-radius: 0 0 6px 6px;
  display: grid;
  grid-template-columns: repeat(5, 237px);
  column-gap: 25.200px;
  align-content: start;
  color: #5d7996;
}
.menu-col { display: flex; flex-direction: column; }
.menu-head { margin: 0 0 5px; height: 42px; padding-bottom: 9px; line-height: 32px; border-bottom: 1px solid #e3e4e8; font-size: 26px; font-weight: 400; letter-spacing: .03em; color: #4c6a8c; }
.mi { display: flex; align-items: center; gap: 9px; padding: 3.500px 0 3.500px 2px; font-size: 17px; line-height: 26.800px; letter-spacing: .042em; white-space: nowrap; }
.micon { width: 24px; height: 24px; flex: none; fill: #4c6a8c; }

/* screenshot annotations */
.annotations { position: absolute; left: 0; top: 0; width: 1876px; height: 765px; pointer-events: none; }
.red-box { fill: none; stroke: #f00; stroke-width: 7; }
.red-fill { fill: #f00; }
```
